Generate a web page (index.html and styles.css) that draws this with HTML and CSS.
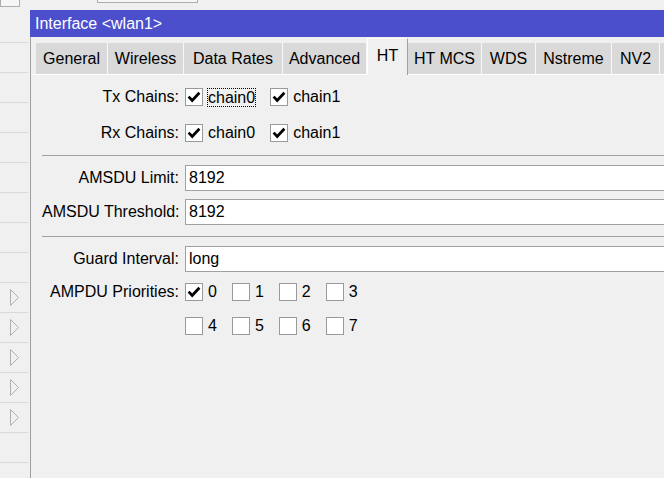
FILE: index.html
```html
<!DOCTYPE html>
<html lang="en">
<head>
    <meta charset="UTF-8">
    <title>Interface &lt;wlan1&gt;</title>
    <link rel="stylesheet" href="styles.css">
</head>
<body>
    <div class="screen">
        <!-- toolbar of the parent window, mostly hidden -->
        <div class="toolbar">
            <span class="tool-btn tool-btn-small"></span>
            <span class="tool-btn tool-btn-wide"></span>
        </div>

        <div class="main">
            <ul class="list">
                <li></li><li></li><li></li><li></li><li></li>
                <li></li><li></li><li></li><li></li>
                <li><svg class="arrow" width="10" height="17" viewBox="0 0 10 17"><polygon points="0.5,0.5 8.5,8.5 0.5,16.5"/></svg></li>
                <li><svg class="arrow" width="10" height="17" viewBox="0 0 10 17"><polygon points="0.5,0.5 8.5,8.5 0.5,16.5"/></svg></li>
                <li><svg class="arrow" width="10" height="17" viewBox="0 0 10 17"><polygon points="0.5,0.5 8.5,8.5 0.5,16.5"/></svg></li>
                <li><svg class="arrow" width="10" height="17" viewBox="0 0 10 17"><polygon points="0.5,0.5 8.5,8.5 0.5,16.5"/></svg></li>
                <li><svg class="arrow" width="10" height="17" viewBox="0 0 10 17"><polygon points="0.5,0.5 8.5,8.5 0.5,16.5"/></svg></li>
                <li></li>
            </ul>

            <div class="window">
                <div class="title">Interface &lt;wlan1&gt;</div>
                <div class="window-body">
                    <div class="tabs">
                        <span class="tab tab-general">General</span>
                        <span class="tab tab-wireless">Wireless</span>
                        <span class="tab tab-rates">Data Rates</span>
                        <span class="tab tab-advanced">Advanced</span>
                        <span class="tab tab-ht active">HT</span>
                        <span class="tab tab-mcs">HT MCS</span>
                        <span class="tab tab-wds">WDS</span>
                        <span class="tab tab-nstreme">Nstreme</span>
                        <span class="tab tab-nv2">NV2</span>
                        <span class="tab tab-more"></span>
                    </div>

                    <div class="form">
                        <div class="row row-tx">
                            <span class="label">Tx Chains:</span>
                            <div class="checks">
                                <label class="check"><span class="box"><svg width="16" height="16" viewBox="0 0 16 16"><path d="M2.6 7.6 L6.2 11.4 L13.4 3.8"/></svg></span><span class="focus">chain0</span></label>
                                <label class="check"><span class="box"><svg width="16" height="16" viewBox="0 0 16 16"><path d="M2.6 7.6 L6.2 11.4 L13.4 3.8"/></svg></span>chain1</label>
                            </div>
                        </div>
                        <div class="row row-rx">
                            <span class="label">Rx Chains:</span>
                            <div class="checks">
                                <label class="check"><span class="box"><svg width="16" height="16" viewBox="0 0 16 16"><path d="M2.6 7.6 L6.2 11.4 L13.4 3.8"/></svg></span>chain0</label>
                                <label class="check"><span class="box"><svg width="16" height="16" viewBox="0 0 16 16"><path d="M2.6 7.6 L6.2 11.4 L13.4 3.8"/></svg></span>chain1</label>
                            </div>
                        </div>

                        <div class="sep sep-a"></div>

                        <div class="row row-limit">
                            <span class="label">AMSDU Limit:</span>
                            <div class="field">8192</div>
                        </div>
                        <div class="row row-threshold">
                            <span class="label">AMSDU Threshold:</span>
                            <div class="field">8192</div>
                        </div>

                        <div class="sep sep-b"></div>

                        <div class="row row-guard">
                            <span class="label">Guard Interval:</span>
                            <div class="field">long</div>
                        </div>
                        <div class="row row-prio">
                            <span class="label">AMPDU Priorities:</span>
                            <div class="checks">
                                <label class="check"><span class="box"><svg width="16" height="16" viewBox="0 0 16 16"><path d="M2.6 7.6 L6.2 11.4 L13.4 3.8"/></svg></span>0</label>
                                <label class="check"><span class="box"></span>1</label>
                                <label class="check"><span class="box"></span>2</label>
                                <label class="check"><span class="box"></span>3</label>
                            </div>
                        </div>
                        <div class="row row-prio2">
                            <span class="label"></span>
                            <div class="checks">
                                <label class="check"><span class="box"></span>4</label>
                                <label class="check"><span class="box"></span>5</label>
                                <label class="check"><span class="box"></span>6</label>
                                <label class="check"><span class="box"></span>7</label>
                            </div>
                        </div>
                    </div>
                </div>
            </div>
        </div>
    </div>
</body>
</html>
```

FILE: styles.css
```css
html, body {
    margin: 0;
    padding: 0;
    overflow: hidden;
    background: #f0f0f0;
}

body {
    font-family: "Liberation Sans", Arial, sans-serif;
    font-size: 16px;
    color: #000;
}

.screen {
    width: 760px;
    height: 478px;
}

/* parent toolbar */
.toolbar {
    height: 10px;
    display: flex;
    align-items: flex-start;
}

.tool-btn {
    display: block;
    box-sizing: border-box;
    background: #f6f6f6;
    border: 1px solid #adadad;
    border-top: none;
}

.tool-btn-small {
    width: 20px;
    height: 7px;
}

.tool-btn-wide {
    width: 101px;
    height: 3px;
    margin-left: 77px;
}

.main {
    display: flex;
    height: 468px;
}

/* list behind the window */
.list {
    list-style: none;
    margin: 0;
    padding: 3px 0 0;
    width: 30px;
    flex: none;
}

.list li {
    box-sizing: border-box;
    width: 28px;
    height: 30px;
    border-bottom: 1px solid #d9d9d9;
    display: flex;
    align-items: center;
    padding-left: 10px;
}

.arrow polygon {
    fill: none;
    stroke: #b0b0b0;
    stroke-width: 1;
}

/* window */
.window {
    flex: 1;
    display: flex;
    flex-direction: column;
}

.title {
    height: 27px;
    box-sizing: border-box;
    padding: 1px 0 0 5px;
    line-height: 26px;
    background: #4b4fcc;
    color: #fff;
}

.window-body {
    flex: 1;
    border-left: 1px solid #a0a0a0;
}

.tabs {
    display: flex;
    align-items: flex-end;
    height: 37px;
    padding-left: 5px;
    border-bottom: 1px solid #fff;
}

.tab {
    flex: none;
    height: 31px;
    box-sizing: border-box;
    padding-top: 1px;
    line-height: 30px;
    text-align: center;
    background: #d9d9d9;
    border-right: 1px solid #f8f8f8;
    white-space: nowrap;
}

.tab-general { width: 72px; }
.tab-wireless { width: 76px; }
.tab-rates { width: 99px; }
.tab-advanced { width: 84px; }
.tab-ht { width: 41px; }
.tab-mcs { width: 74px; }
.tab-wds { width: 54px; }
.tab-nstreme { width: 76px; }
.tab-nv2 { width: 48px; }
.tab-more { width: 60px; }

.tab.active {
    height: 37px;
    margin-bottom: -1px;
    padding-top: 0;
    line-height: 33px;
    background: #f0f0f0;
    border-top: 1px solid #fff;
    border-left: 1px solid #fff;
    border-right: 1px solid #a0a0a0;
}

/* form */
.form {
    padding-left: 11px;
}

.row {
    display: flex;
    align-items: center;
    height: 26px;
}

.row-tx { margin-top: 9px; }
.row-rx { margin-top: 10px; }
.row-limit { margin-top: 9px; }
.row-threshold { margin-top: 8px; }
.row-guard { margin-top: 9px; }
.row-prio { margin-top: 7px; }
.row-prio2 { margin-top: 8px; }

.label {
    width: 137px;
    flex: none;
    margin-right: 6px;
    text-align: right;
    white-space: nowrap;
}

.sep {
    height: 0;
    border-top: 1px solid #a0a0a0;
}

.sep-a { margin-top: 9px; }
.sep-b { margin-top: 11px; }

.field {
    flex: 1;
    box-sizing: border-box;
    height: 26px;
    line-height: 24px;
    padding-left: 3px;
    background: #fff;
    border: 1px solid #a0a0a0;
}

.checks {
    display: flex;
    gap: 15px;
}

.check {
    display: flex;
    align-items: center;
    gap: 5px;
}

.box {
    box-sizing: border-box;
    width: 18px;
    height: 18px;
    background: #fff;
    border: 1px solid #9a9a9a;
    display: flex;
    align-items: center;
    justify-content: center;
}

.box path {
    fill: none;
    stroke: #000;
    stroke-width: 2.8;
}

.focus {
    border: 1px dotted #000;
    line-height: 17px;
    margin: 0 -1px;
}
```
